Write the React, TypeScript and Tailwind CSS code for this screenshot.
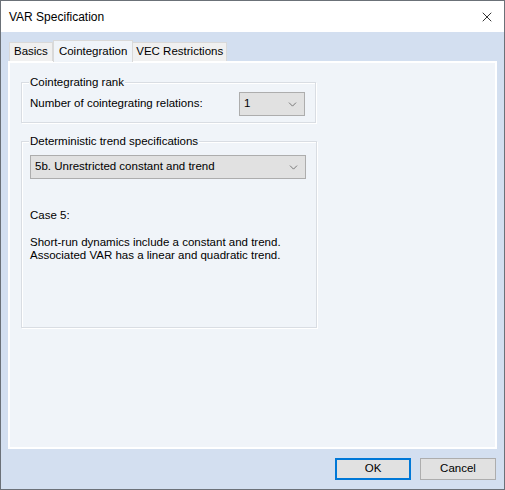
import { ChevronDown, X } from "lucide-react";

const font = { fontFamily: '"Liberation Sans", Arial, sans-serif' };

function Combo({ value, className }: { value: string; className: string }) {
  return (
    <div
      className={`flex items-center justify-between border border-[#adadad] bg-[#e1e1e1] pl-[4px] pr-[5px] text-[11.5px] text-[#000] ${className}`}
    >
      <span>{value}</span>
      <ChevronDown className="h-[13px] w-[13px] text-[#606060]" strokeWidth={1.5} />
    </div>
  );
}

function Group({
  legend,
  className,
  children,
}: {
  legend: string;
  className: string;
  children: React.ReactNode;
}) {
  return (
    <div
      className={`relative border border-[#d9dde3] shadow-[inset_1px_1px_0_#ffffff,1px_1px_0_#ffffff] ${className}`}
    >
      <span className="absolute left-[7px] top-[-8px] bg-[#f0f4f9] px-[1px] text-[11.5px] leading-[14px] text-[#000]">
        {legend}
      </span>
      {children}
    </div>
  );
}

export default function App() {
  return (
    <div
      className="flex h-[490px] w-[505px] flex-col border border-[#6b7178] bg-[#d3dff0] text-[#000]"
      style={font}
    >
      {/* Title bar */}
      <div className="flex h-[31px] shrink-0 items-center justify-between bg-white pl-[8px] pr-[9px]">
        <span className="text-[12px]">VAR Specification</span>
        <X className="h-[16px] w-[16px]" strokeWidth={1.2} />
      </div>

      <div className="flex flex-1 flex-col px-[7px] pt-[8px]">
        {/* Tabs */}
        <div className="flex h-[21px] items-end pl-[1px] text-[11.5px]">
          <div className="flex h-[19px] items-center border border-b-0 border-[#d9d9d9] bg-[#f0f0f0] px-[4px]">
            Basics
          </div>
          <div className="relative z-10 mb-[-1px] flex h-[22px] items-center border border-b-0 border-[#d9d9d9] bg-[#f0f4f9] px-[5px]">
            Cointegration
          </div>
          <div className="flex h-[19px] items-center border border-b-0 border-l-0 border-[#d9d9d9] bg-[#f0f0f0] px-[3px]">
            VEC Restrictions
          </div>
        </div>

        {/* Tab panel */}
        <div className="h-[388px] border-2 border-white bg-[#f0f4f9] pl-[11px] pt-[19px]">
          <Group legend="Cointegrating rank" className="h-[41px] w-[295px]">
            <div className="flex items-center justify-between pl-[8px] pr-[10px] pt-[9px]">
              <span className="text-[11.5px]">Number of cointegrating relations:</span>
              <Combo value="1" className="h-[24px] w-[66px]" />
            </div>
          </Group>

          <Group legend="Deterministic trend specifications" className="mt-[18px] h-[187px] w-[296px]">
            <div className="pl-[8px] pr-[10px] pt-[13px]">
              <Combo value="5b. Unrestricted constant and trend" className="h-[24px] w-[276px]" />
              <div className="mt-[30px] text-[11.5px] leading-[13px]">Case 5:</div>
              <div className="mt-[14px] text-[11.5px] leading-[13px]">
                Short-run dynamics include a constant and trend.
                <br />
                Associated VAR has a linear and quadratic trend.
              </div>
            </div>
          </Group>
        </div>

        {/* Buttons */}
        <div className="flex flex-1 items-center justify-end gap-[9px] pr-[1px]">
          <button className="h-[22px] w-[76px] border-2 border-[#0078d7] bg-[#e1e1e1] text-[11.5px]">
            OK
          </button>
          <button className="h-[22px] w-[76px] border border-[#adadad] bg-[#e1e1e1] text-[11.5px]">
            Cancel
          </button>
        </div>
      </div>
    </div>
  );
}
